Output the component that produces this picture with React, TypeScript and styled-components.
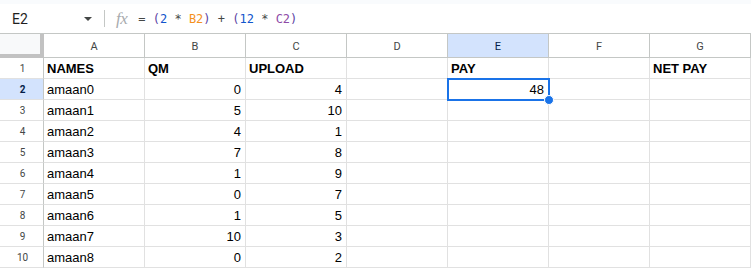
import styled, { createGlobalStyle } from 'styled-components';

const GlobalStyle = createGlobalStyle`
	html, body {
		margin: 0;
		padding: 0;
		background: #ffffff;
		font-family: 'Liberation Sans', Arial, sans-serif;
	}
`;

const COLUMNS = ['A', 'B', 'C', 'D', 'E', 'F', 'G'];

const rows = [
	{ name: 'amaan0', qm: 0, upload: 4 },
	{ name: 'amaan1', qm: 5, upload: 10 },
	{ name: 'amaan2', qm: 4, upload: 1 },
	{ name: 'amaan3', qm: 7, upload: 8 },
	{ name: 'amaan4', qm: 1, upload: 9 },
	{ name: 'amaan5', qm: 0, upload: 7 },
	{ name: 'amaan6', qm: 1, upload: 5 },
	{ name: 'amaan7', qm: 10, upload: 3 },
	{ name: 'amaan8', qm: 0, upload: 2 },
];

const formula: { text: string; color: string }[] = [
	{ text: '= ', color: '#444746' },
	{ text: '(', color: '#5b3fa3' },
	{ text: '2', color: '#1155cc' },
	{ text: ' * ', color: '#444746' },
	{ text: 'B2', color: '#f4911e' },
	{ text: ')', color: '#5b3fa3' },
	{ text: ' + ', color: '#444746' },
	{ text: '(', color: '#5b3fa3' },
	{ text: '12', color: '#1155cc' },
	{ text: ' * ', color: '#444746' },
	{ text: 'C2', color: '#8e4aa6' },
	{ text: ')', color: '#5b3fa3' },
];

const Page = styled.div`
	width: 751px;
	height: 268px;
	overflow: hidden;
	background: #ffffff;
`;

const TopStrip = styled.div`
	height: 4px;
	background: #f9fbfd;
`;

const FormulaBar = styled.div`
	height: 29px;
	display: flex;
	align-items: center;
	border-bottom: 1px solid #c4c7c5;
`;

const NameBox = styled.div`
	width: 104px;
	box-sizing: border-box;
	padding: 0 12px 0 12px;
	display: flex;
	align-items: center;
	justify-content: space-between;
	font-family: Roboto, 'Liberation Sans', sans-serif;
	font-size: 14px;
	color: #1f1f1f;
`;

const Caret = styled.span`
	width: 0;
	height: 0;
	border-left: 4px solid transparent;
	border-right: 4px solid transparent;
	border-top: 4px solid #444746;
	margin-top: 1px;
`;

const Divider = styled.div`
	width: 1px;
	height: 17px;
	background: #c4c7c5;
`;

const Fx = styled.span`
	margin: 0 11px 0 11px;
	font-family: 'Liberation Serif', serif;
	font-style: italic;
	font-size: 17px;
	color: #a8abae;
	letter-spacing: -0.5px;
`;

const FormulaText = styled.div`
	font-family: 'DejaVu Sans Mono', 'Liberation Mono', monospace;
	font-size: 12px;
	white-space: pre;
	padding-top: 1px;
`;

const Token = styled.span<{ $color: string }>`
	color: ${(p) => p.$color};
`;

const Grid = styled.div`
	display: grid;
	grid-template-columns: 44px repeat(7, 101px);
	grid-template-rows: 24px repeat(10, 21px);
`;

const Corner = styled.div`
	box-sizing: border-box;
	background: #f8f9fa;
	border-right: 4px solid #c2c2c2;
	border-bottom: 4px solid #c2c2c2;
`;

const ColHeader = styled.div<{ $active?: boolean }>`
	box-sizing: border-box;
	display: flex;
	align-items: center;
	justify-content: center;
	border-right: 1px solid #c4c7c5;
	border-bottom: 1px solid #c4c7c5;
	background: ${(p) => (p.$active ? '#d3e3fd' : '#ffffff')};
	color: ${(p) => (p.$active ? '#041e49' : '#444746')};
	font-family: Roboto, 'Liberation Sans', sans-serif;
	font-size: 11px;
	padding-top: 1px;
`;

const RowHeader = styled.div<{ $active?: boolean }>`
	box-sizing: border-box;
	display: flex;
	align-items: center;
	justify-content: center;
	border-right: 1px solid #c4c7c5;
	border-bottom: 1px solid #e1e1e1;
	background: ${(p) => (p.$active ? '#d3e3fd' : '#ffffff')};
	color: ${(p) => (p.$active ? '#041e49' : '#444746')};
	font-weight: ${(p) => (p.$active ? 700 : 400)};
	font-family: Roboto, 'Liberation Sans', sans-serif;
	font-size: 10px;
	padding-left: 2px;
`;

const Cell = styled.div<{ $align?: 'left' | 'right'; $bold?: boolean }>`
	position: relative;
	box-sizing: border-box;
	display: flex;
	align-items: flex-end;
	justify-content: ${(p) => (p.$align === 'right' ? 'flex-end' : 'flex-start')};
	padding: 0 4px 2px 3px;
	border-right: 1px solid #e1e1e1;
	border-bottom: 1px solid #e1e1e1;
	font-family: 'Liberation Sans', Arial, sans-serif;
	font-size: 13px;
	font-weight: ${(p) => (p.$bold ? 700 : 400)};
	color: #000000;
	white-space: nowrap;
`;

// selected cell outline with its fill handle, drawn over the grid
const Selection = styled.div`
	position: absolute;
	z-index: 2;
	left: -1px;
	top: -1px;
	right: -2px;
	bottom: -2px;
	border: 2px solid #1a73e8;
	pointer-events: none;
`;

const FillHandle = styled.div`
	position: absolute;
	right: -6px;
	bottom: -6px;
	width: 8px;
	height: 8px;
	border-radius: 50%;
	background: #1a73e8;
	border: 1px solid #ffffff;
`;

export default function App() {
	const header = ['NAMES', 'QM', 'UPLOAD', '', 'PAY', '', 'NET PAY'];

	return (
		<Page>
			<GlobalStyle />
			<TopStrip />
			<FormulaBar>
				<NameBox>
					<span>E2</span>
					<Caret />
				</NameBox>
				<Divider />
				<Fx>fx</Fx>
				<FormulaText>
					{formula.map((t, i) => (
						<Token key={i} $color={t.color}>
							{t.text}
						</Token>
					))}
				</FormulaText>
			</FormulaBar>
			<Grid>
				<Corner />
				{COLUMNS.map((c) => (
					<ColHeader key={c} $active={c === 'E'}>
						{c}
					</ColHeader>
				))}

				<RowHeader>1</RowHeader>
				{header.map((h, i) => (
					<Cell key={i} $bold>
						{h}
					</Cell>
				))}

				{rows.map((r, i) => (
					<>
						<RowHeader key={`h${i}`} $active={i === 0}>
							{i + 2}
						</RowHeader>
						<Cell key={`a${i}`}>{r.name}</Cell>
						<Cell key={`b${i}`} $align='right'>
							{r.qm}
						</Cell>
						<Cell key={`c${i}`} $align='right'>
							{r.upload}
						</Cell>
						<Cell key={`d${i}`} />
						<Cell key={`e${i}`} $align='right'>
							{i === 0 ? '48' : ''}
							{i === 0 && (
								<Selection>
									<FillHandle />
								</Selection>
							)}
						</Cell>
						<Cell key={`f${i}`} />
						<Cell key={`g${i}`} />
					</>
				))}
			</Grid>
		</Page>
	);
}
